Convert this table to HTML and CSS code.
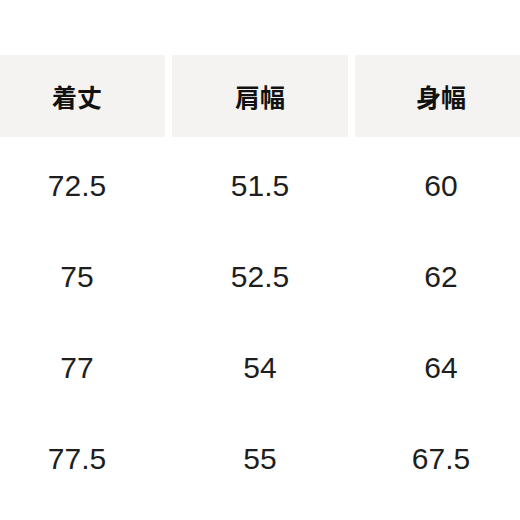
FILE: index.html
```html
<!DOCTYPE html>
<html lang="ja">
<head>
<meta charset="utf-8">
<link rel="stylesheet" href="styles.css">
</head>
<body>
<div class="table">
  <div class="head">着丈</div>
  <div class="head">肩幅</div>
  <div class="head">身幅</div>
  <div class="cell">72.5</div>
  <div class="cell">51.5</div>
  <div class="cell">60</div>
  <div class="cell">75</div>
  <div class="cell">52.5</div>
  <div class="cell">62</div>
  <div class="cell">77</div>
  <div class="cell">54</div>
  <div class="cell">64</div>
  <div class="cell">77.5</div>
  <div class="cell">55</div>
  <div class="cell">67.5</div>
</div>
</body>
</html>
```

FILE: styles.css
```css
html, body {
  margin: 0;
  padding: 0;
  background: #ffffff;
  width: 520px;
  height: 520px;
  overflow: hidden;
}
.table {
  margin-left: -11px;
  padding-top: 55px;
  display: grid;
  grid-template-columns: 176px 176px 172px;
  grid-template-rows: 85px repeat(4, 91px);
  column-gap: 7px;
  row-gap: 0;
}
.head {
  background: #f4f3f1;
  display: flex;
  align-items: center;
  justify-content: center;
  font-family: "Noto Sans CJK JP", "Noto Sans", sans-serif;
  font-weight: 700;
  font-size: 25px;
  color: #111111;
  margin-bottom: 3px;
}
.cell {
  display: flex;
  align-items: center;
  justify-content: center;
  font-family: "Liberation Sans", Arial, sans-serif;
  font-size: 30px;
  color: #1e1e1e;
}
```
